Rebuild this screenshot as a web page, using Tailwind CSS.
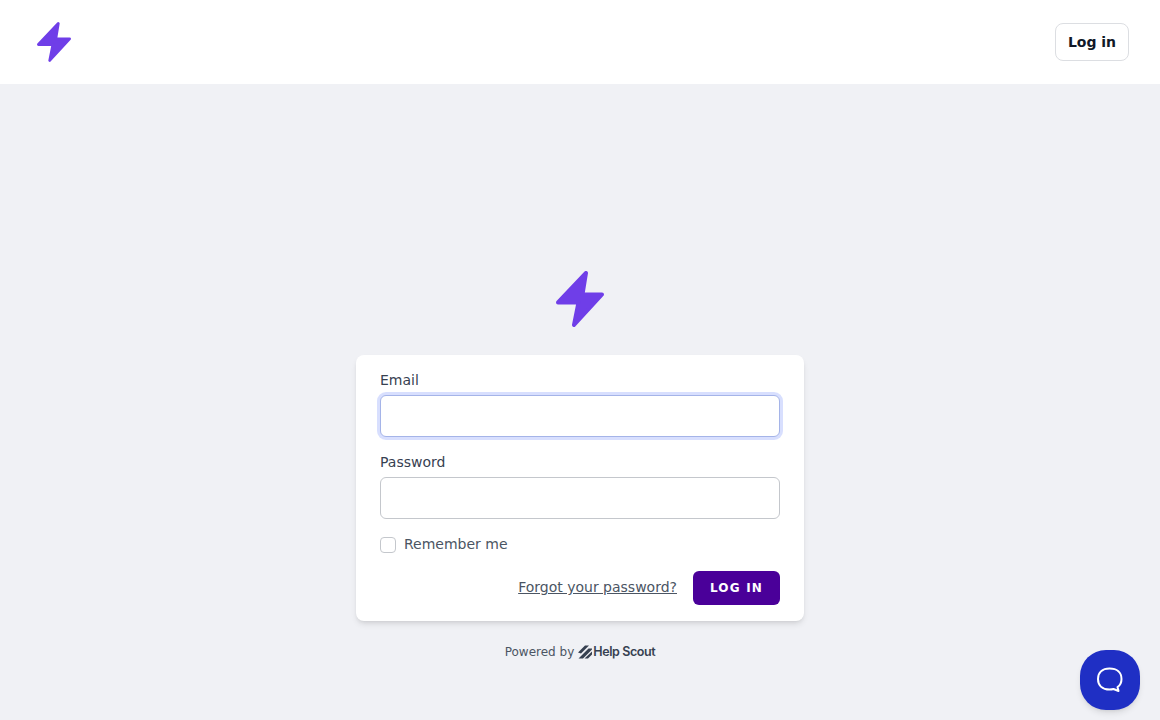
<!DOCTYPE html>
<html lang="en">
<head>
  <meta charset="UTF-8" />
  <title>Log in</title>
  <script src="https://cdn.jsdelivr.net/npm/@tailwindcss/browser@4"></script>
</head>
<body class="bg-[#f0f1f5] h-[720px] overflow-hidden font-['DejaVu_Sans',sans-serif] text-[#374151]">

  <!-- top nav -->
  <header class="h-[84px] bg-white flex items-center justify-between pl-[37px] pr-[31px]">
    <svg class="w-[34px] h-[40px]" viewBox="0 0 48 56">
      <path d="M30 2 L26.5 23.5 L46 23.5 L18 54 L22.5 31.5 L2 31.5 Z" fill="#6f3ee8" stroke="#6f3ee8" stroke-width="4" stroke-linejoin="round"/>
    </svg>
    <button class="w-[74px] h-[38px] -mt-px bg-white border border-[#dcdee2] rounded-lg text-sm font-bold text-[#111827]">Log in</button>
  </header>

  <main class="flex flex-col items-center pt-[187px]">
    <svg class="w-[48px] h-[56px]" viewBox="0 0 48 56">
      <path d="M30 2 L26.5 23.5 L46 23.5 L18 54 L22.5 31.5 L2 31.5 Z" fill="#6f3ee8" stroke="#6f3ee8" stroke-width="4" stroke-linejoin="round"/>
    </svg>

    <form class="w-[448px] mt-[28px] bg-white rounded-lg shadow-md px-6 pt-[15px] pb-4">
      <label class="block text-sm leading-5 text-[#374151]" for="email">Email</label>
      <input id="email" type="email" class="block w-full h-[42px] mt-[5px] bg-white border border-[#a5b4e8] rounded-md ring-[3px] ring-[#c7d2fe]/70" />

      <label class="block mt-[15px] text-sm leading-5 text-[#374151]" for="password">Password</label>
      <input id="password" type="password" class="block w-full h-[42px] mt-[5px] bg-white border border-[#c4c7cc] rounded-md" />

      <label class="flex items-center mt-[15px] h-5">
        <span class="w-4 h-4 mt-[2px] bg-white border border-[#c4c7cc] rounded"></span>
        <span class="ml-2 text-sm text-[#4b5563]">Remember me</span>
      </label>

      <div class="flex items-center justify-end mt-[17px]">
        <a href="#" class="-mt-[2px] text-sm text-[#4b5563] underline">Forgot your password?</a>
        <button type="button" class="ml-4 w-[87px] h-[34px] bg-[#4a0099] rounded-md text-xs font-bold tracking-widest text-white">LOG IN</button>
      </div>
    </form>

    <div class="flex items-center h-4 mt-[23px] text-xs text-[#4b5563]">
      <span>Powered by</span>
      <svg class="w-[14px] h-[14px] ml-1" viewBox="0 0 14 14">
        <path d="M0 7.5 L7 0.5 H11 L3 8.5 Z M0.5 13.5 L10.5 3.5 H14 V4.5 L5 13.5 Z M6.5 13.5 L14 6.5 V9.5 L10 13.5 Z" fill="#374151"/>
      </svg>
      <span class="ml-px font-['Inter',sans-serif] font-semibold text-[12.5px] tracking-[-0.4px] text-[#374151]">Help Scout</span>
    </div>
  </main>

  <!-- help beacon -->
  <div class="fixed right-5 bottom-2.5 w-[60px] h-[60px] bg-[#1f2fc4] rounded-[26px] shadow-md flex items-center justify-center">
    <svg class="w-7 h-7" viewBox="0 0 28 28" fill="none">
      <path d="M13.5 2.5 C21 2.5 25.5 6.5 25.5 13 C25.5 17 24 19.5 21.5 21 L22.5 25 L17.5 23 C16.5 23.3 15 23.5 13.5 23.5 C6.5 23.5 2 19.5 2 13 C2 6.5 6.5 2.5 13.5 2.5 Z" stroke="white" stroke-width="2" stroke-linejoin="round"/>
    </svg>
  </div>
</body>
</html>
